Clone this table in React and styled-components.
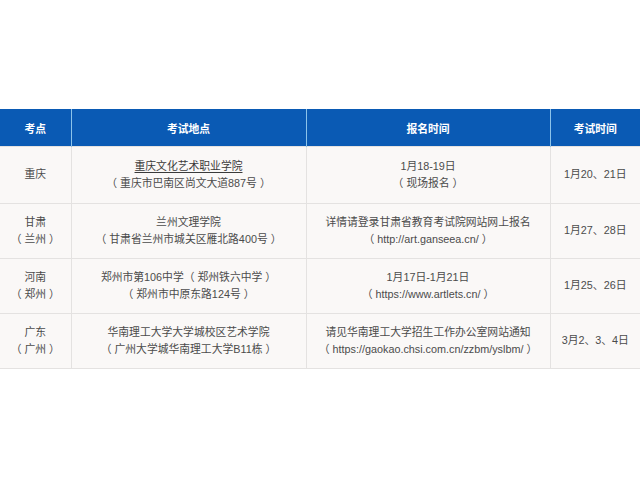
import styled, { createGlobalStyle } from "styled-components";

const GlobalStyle = createGlobalStyle`
    html, body {
        margin: 0;
        padding: 0;
        background: #ffffff;
    }
`

const Page = styled.div`
    width: 640px;
    height: 479px;
    padding-top: 109px;
    box-sizing: border-box;
    font-family: "Liberation Sans", "Noto Sans CJK SC", sans-serif;
    text-spacing-trim: space-all;
`

const Table = styled.table`
    width: 640px;
    border-collapse: collapse;
    table-layout: fixed;
`

const HeadCell = styled.th`
    height: 37px;
    padding: 0;
    background: #0a5ab4;
    color: #ffffff;
    font-size: 10.8px;
    font-weight: bold;
    text-align: center;
    border-left: 1px solid #8cc3ea;
    &:first-child {
        border-left: none;
    }
`

const Row = styled.tr`
    height: ${({tall}) => tall ? '57px' : '55px'};
    background: #faf8f7;
`

const Cell = styled.td`
    padding: 0;
    text-align: center;
    vertical-align: middle;
    font-size: 10.8px;
    line-height: 17.5px;
    color: #4b4b4b;
    border: 1px solid #e4e2e1;
    &:first-child {
        border-left: none;
    }
    &:last-child {
        border-right: none;
    }
`

const Link = styled.span`
    color: #3a3a3a;
    text-decoration: underline;
    text-underline-offset: 2px;
`

const rows = [
    {
        city: ['重庆'],
        place: [<Link key="l">重庆文化艺术职业学院</Link>, '（ 重庆市巴南区尚文大道887号 ）'],
        apply: ['1月18-19日', '（ 现场报名 ）'],
        exam: '1月20、21日',
        tall: true
    },
    {
        city: ['甘肃', '（ 兰州 ）'],
        place: ['兰州文理学院', '（ 甘肃省兰州市城关区雁北路400号 ）'],
        apply: ['详情请登录甘肃省教育考试院网站网上报名', '（ http://art.ganseea.cn/ ）'],
        exam: '1月27、28日'
    },
    {
        city: ['河南', '（ 郑州 ）'],
        place: ['郑州市第106中学（ 郑州铁六中学 ）', '（ 郑州市中原东路124号 ）'],
        apply: ['1月17日-1月21日', '（ https://www.artlets.cn/ ）'],
        exam: '1月25、26日'
    },
    {
        city: ['广东', '（ 广州 ）'],
        place: ['华南理工大学大学城校区艺术学院', '（ 广州大学城华南理工大学B11栋 ）'],
        apply: ['请见华南理工大学招生工作办公室网站通知', '（ https://gaokao.chsi.com.cn/zzbm/yslbm/ ）'],
        exam: '3月2、3、4日'
    }
]

const Lines = ({items}) => items.map((item, i) => (
    <div key={i}>{item}</div>
))

const App = () => {
    return (
        <Page>
            <GlobalStyle />
            <Table>
                <colgroup>
                    <col style={{width: 71}} />
                    <col style={{width: 235}} />
                    <col style={{width: 244}} />
                    <col style={{width: 90}} />
                </colgroup>
                <thead>
                    <tr>
                        <HeadCell>考点</HeadCell>
                        <HeadCell>考试地点</HeadCell>
                        <HeadCell>报名时间</HeadCell>
                        <HeadCell>考试时间</HeadCell>
                    </tr>
                </thead>
                <tbody>
                    {rows.map((r, i) => (
                        <Row key={i} tall={r.tall}>
                            <Cell><Lines items={r.city} /></Cell>
                            <Cell><Lines items={r.place} /></Cell>
                            <Cell><Lines items={r.apply} /></Cell>
                            <Cell>{r.exam}</Cell>
                        </Row>
                    ))}
                </tbody>
            </Table>
        </Page>
    );
}

export default App;
